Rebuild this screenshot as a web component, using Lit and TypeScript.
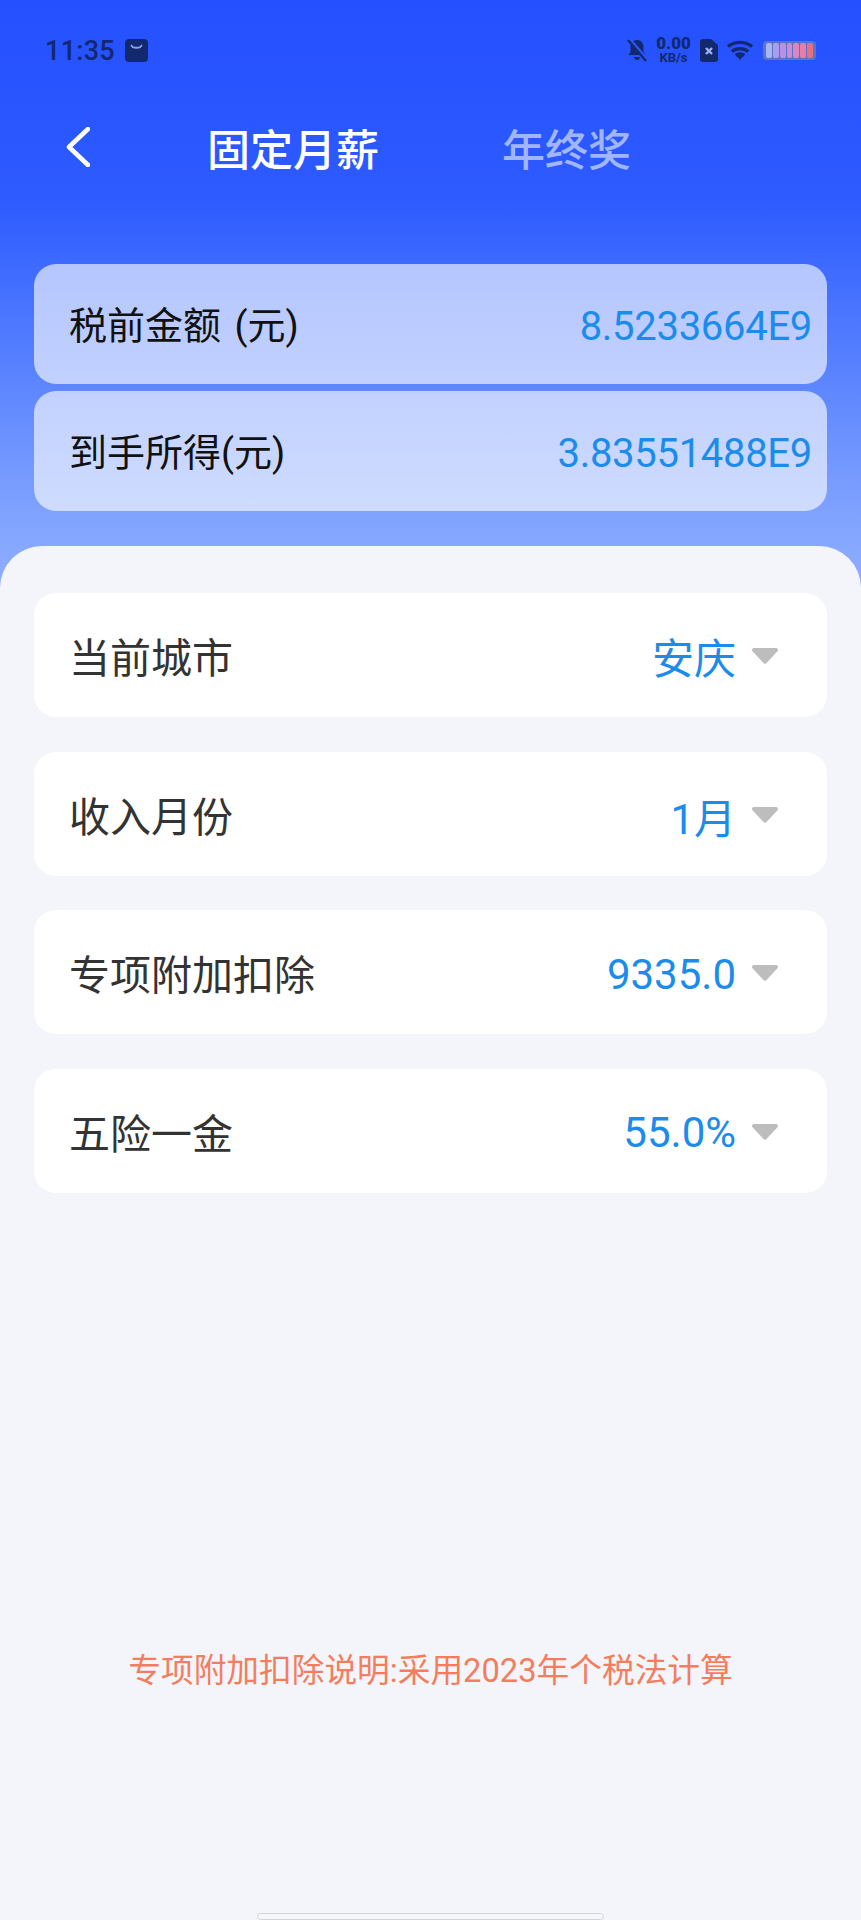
import { LitElement, html, css } from "lit";
import { customElement } from "lit/decorators.js";
import { classMap } from "lit/directives/class-map.js";

const bars = ["#a9b5ee", "#a89df0", "#b592e6", "#c98ad8", "#d987c4", "#e57fa8", "#ea6f7c"];

@customElement("app-root")
export class AppRoot extends LitElement {
  static styles = css`
    :host {
      display: flex;
      flex-direction: column;
      width: 861px;
      height: 1920px;
      overflow: hidden;
      font-family: Roboto, "Noto Sans CJK SC", sans-serif;
      background: linear-gradient(180deg, #2450ff 0px, #2d5bff 200px, #4470ff 290px, #7fa2ff 510px, #90b0ff 600px);
      background-size: 100% 600px;
      background-repeat: no-repeat;
    }
    .status { height: 100px; display: flex; align-items: center; padding: 0 45px; justify-content: space-between; box-sizing: border-box; color: #12296e; }
    .status-left { display: flex; align-items: center; gap: 10px; }
    .time { font-size: 27px; font-weight: 500; letter-spacing: 0.3px; padding-top: 2px; }
    .status-right { display: flex; align-items: center; }
    .speed { width: 37px; display: flex; flex-direction: column; align-items: center; font-weight: 700; line-height: 1; margin: 0 8px; }
    .speed b { font-size: 17px; line-height: 16px; }
    .speed span { font-size: 13px; line-height: 14px; white-space: nowrap; }
    .battery { width: 53px; height: 19px; border-radius: 4px; background: #5d74c4; display: flex; gap: 1px; padding: 2px 3px; box-sizing: border-box; margin-left: 10px; }
    .battery i { flex: 1; border-radius: 2px; }
    .nav { height: 94px; display: flex; align-items: center; padding-left: 66px; font-size: 43px; font-weight: 500; }
    .back { margin-right: 117px; display: block; }
    .tab { color: #fff; margin-right: 123px; }
    .tab.off { color: rgba(255,255,255,.58); margin: 0; }
    .summary { margin-top: 70px; padding: 0 34px; display: flex; flex-direction: column; gap: 7px; }
    .sum { height: 120px; border-radius: 22px; background: rgba(255,255,255,.62); display: flex; align-items: center; justify-content: space-between; padding: 0 15px 0 35px; font-size: 38px; color: #111; }
    .sum .label { padding-bottom: 3px; }
    .sum .label.wide { word-spacing: 4px; }
    .sum .v { font-size: 40px; letter-spacing: -0.3px; color: #1b8ceb; padding-top: 4px; }
    .sheet { margin-top: 35px; flex: 1; background: #f3f5fa; border-radius: 42px 42px 0 0; padding: 47px 34px 0; display: flex; flex-direction: column; gap: 34.500px; position: relative; }
    .row { height: 124px; border-radius: 22px; background: #fff; display: flex; align-items: center; padding: 0 49px 0 35px; font-size: 41px; color: #333; }
    .row .label { flex: 1; }
    .row .v { color: #1b8ceb; font-size: 42px; }
    .row .v.num { padding-top: 4px; }
    .arrow { margin-left: 16px; margin-top: 2px; display: block; }
    .note { position: absolute; left: 0; right: 0; top: 1098px; text-align: center; font-size: 32.700px; color: #f47d5e; }
    .home { position: absolute; left: 257px; width: 347px; top: 1367px; height: 7px; box-sizing: border-box; border: 1.5px solid #d3d5da; border-radius: 4px; background: #f6f7fa; }
  `;

  rows = [
    ["当前城市", "安庆", false],
    ["收入月份", "1月", true],
    ["专项附加扣除", "9335.0", true],
    ["五险一金", "55.0%", true],
  ];

  render() {
    return html`
      <div class="status">
        <div class="status-left">
          <span class="time">11:35</span>
          <svg width="23" height="23" viewBox="0 0 23 23"><rect width="23" height="23" rx="4" fill="#12296e"/><path d="M6.500 6.500c1 3 9 3 10 0" fill="none" stroke="#8aa0f0" stroke-width="1.800" stroke-linecap="round"/></svg>
        </div>
        <div class="status-right">
          <svg width="20" height="24" viewBox="0 0 20 24"><path d="M10 2c4 0 6.500 3 6.500 7v5l2 3h-17l2-3V9c0-4 2.500-7 6.500-7zM7 19h6c0 2-1.500 3-3 3s-3-1-3-3z" fill="#12296e"/><path d="M1 0l18 21" stroke="#2a55ff" stroke-width="4"/><path d="M1 2l18 21" stroke="#12296e" stroke-width="2.400"/></svg>
          <div class="speed"><b>0.00</b><span>KB/s</span></div>
          <svg width="18" height="23" viewBox="0 0 18 23"><path d="M3 0h8l7 6v14a3 3 0 0 1-3 3H3a3 3 0 0 1-3-3V3a3 3 0 0 1 3-3z" fill="#12296e"/><path d="M6 9l6 6M12 9l-6 6" stroke="#9fb2f5" stroke-width="2.400"/></svg>
          <svg style="margin-left:9px" width="26" height="20" viewBox="0 0 27 20" fill="none" stroke="#12296e" stroke-width="3.400"><path d="M1 6.500c7-6 18-6 25 0"/><path d="M5 11.500c5-4 12-4 17 0"/><path d="M9 15.500c3-1.800 6-1.800 9 0"/><path d="M13.500 20l-3.500-3.500c2-1 5-1 7 0z" fill="#12296e" stroke="none"/></svg>
          <div class="battery">${bars.map((c) => html`<i style="background:${c}"></i>`)}</div>
        </div>
      </div>
      <div class="nav">
        <svg class="back" width="24" height="40" viewBox="0 0 24 40" fill="none" stroke="#fff" stroke-width="4.500" stroke-linecap="round" stroke-linejoin="round"><path d="M22 2L3 20l19 18"/></svg>
        <span class="tab">固定月薪</span>
        <span class="tab off">年终奖</span>
      </div>
      <div class="summary">
        <div class="sum"><span class="label wide">税前金额 (元)</span><span class="v">8.5233664E9</span></div>
        <div class="sum"><span class="label">到手所得(元)</span><span class="v">3.83551488E9</span></div>
      </div>
      <div class="sheet">
        ${this.rows.map(
          ([l, v, num]) => html`<div class="row"><span class="label">${l}</span><span class=${classMap({ v: true, num: !!num })}>${v}</span>
            <svg class="arrow" width="26" height="16" viewBox="0 0 26 16"><path d="M2 0h22a2 2 0 0 1 1.500 3.300L14.500 15a2 2 0 0 1-3 0L.5 3.300A2 2 0 0 1 2 0z" fill="#bdbdbd"/></svg></div>`
        )}
        <div class="note">专项附加扣除说明:采用2023年个税法计算</div>
        <div class="home"></div>
      </div>
    `;
  }
}
